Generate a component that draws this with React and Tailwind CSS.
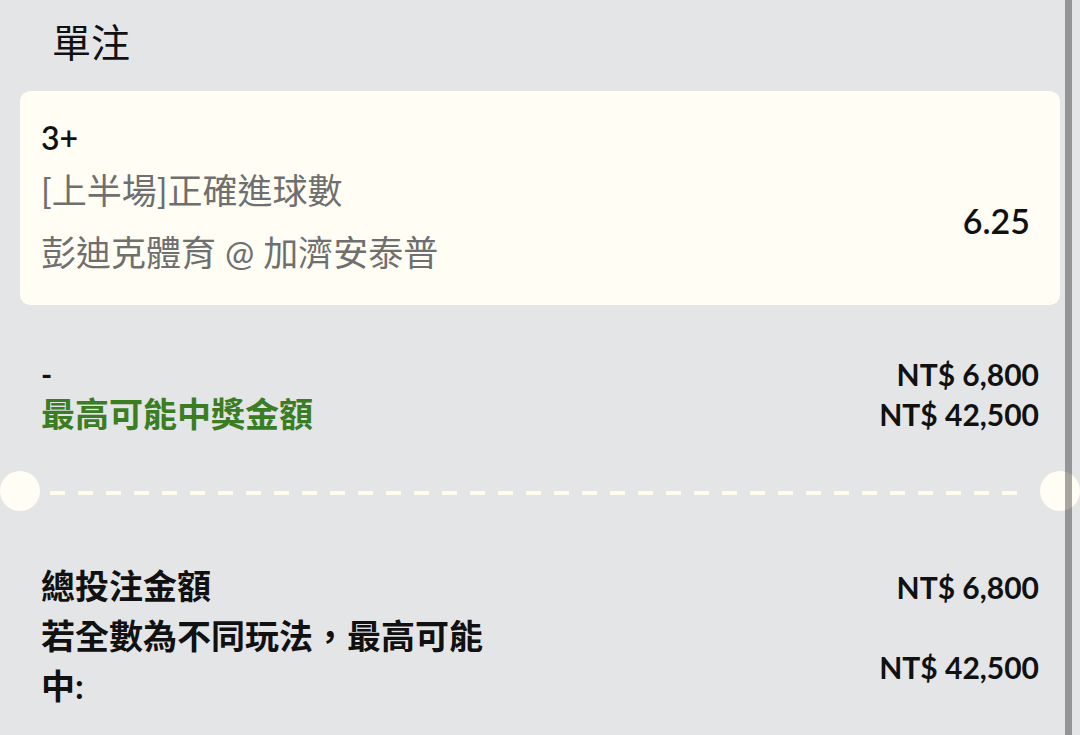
export default function App() {
  const cjk = "font-['Lato','Noto_Sans_CJK_TC',sans-serif]";
  return (
    <div className={`relative w-[1080px] h-[735px] overflow-hidden bg-[#e4e5e7] ${cjk}`}>
      <div className="flex flex-col">
        <div className="pt-[15px] pl-[52px] h-[65px] text-[39px] leading-[50px] text-[#111] mb-[26px] font-['Noto_Sans_CJK_TC',sans-serif]">
          單注
        </div>

        <div className="mx-[20px] rounded-[10px] bg-[#fffdf4] pt-[26px] pb-[22px] pl-[21px] pr-[30px]">
          <div className="text-[32px] leading-[42px] font-semibold text-[#111]">3+</div>
          <div className="flex items-center justify-between">
            <div className="flex flex-col text-[35px] leading-[62px] text-[#6f6f6f]">
              <div>[上半場]正確進球數</div>
              <div>彭迪克體育 @ 加濟安泰普</div>
            </div>
            <div className="text-[34px] leading-[40px] font-semibold text-[#111]">6.25</div>
          </div>
        </div>

        <div className="mt-[49px] px-[41px] flex flex-col">
          <div className="flex items-center justify-between h-[40px] text-[30px] leading-[40px] font-bold text-[#111]">
            <span>-</span>
            <span>NT$ 6,800</span>
          </div>
          <div className="flex items-center justify-between h-[40px]">
            <span className="text-[34px] leading-[40px] font-bold text-[#3b7d23]">最高可能中獎金額</span>
            <span className="text-[30px] leading-[40px] font-bold text-[#111]">NT$ 42,500</span>
          </div>
        </div>

        <div className="mt-[37px] flex items-center">
          <div className="w-[40px] h-[40px] rounded-full bg-[#fffdf4] shrink-0" />
          <div className="flex-1 mx-[10px] mt-[4px] h-[4px] bg-[repeating-linear-gradient(90deg,#fffcee_0px,#fffcee_15px,transparent_15px,transparent_28px)]" />
          <div className="w-[40px] h-[40px] rounded-full bg-[#fffdf4] shrink-0" />
        </div>

        <div className="mt-[50px] px-[41px] flex flex-col">
          <div className="flex items-baseline justify-between">
            <span className="text-[34px] leading-[50px] font-bold text-[#111]">總投注金額</span>
            <span className="text-[30px] leading-[40px] font-bold text-[#111]">NT$ 6,800</span>
          </div>
          <div className="flex items-center justify-between">
            <span className="w-[460px] text-[34px] leading-[50px] font-bold text-[#111]">若全數為不同玩法，最高可能中:</span>
            <span className="mt-[11px] text-[30px] leading-[40px] font-bold text-[#111]">NT$ 42,500</span>
          </div>
        </div>
      </div>

      <div className="absolute top-0 bottom-0 right-[8px] w-[7px] bg-black/[0.35]" />
    </div>
  );
}
